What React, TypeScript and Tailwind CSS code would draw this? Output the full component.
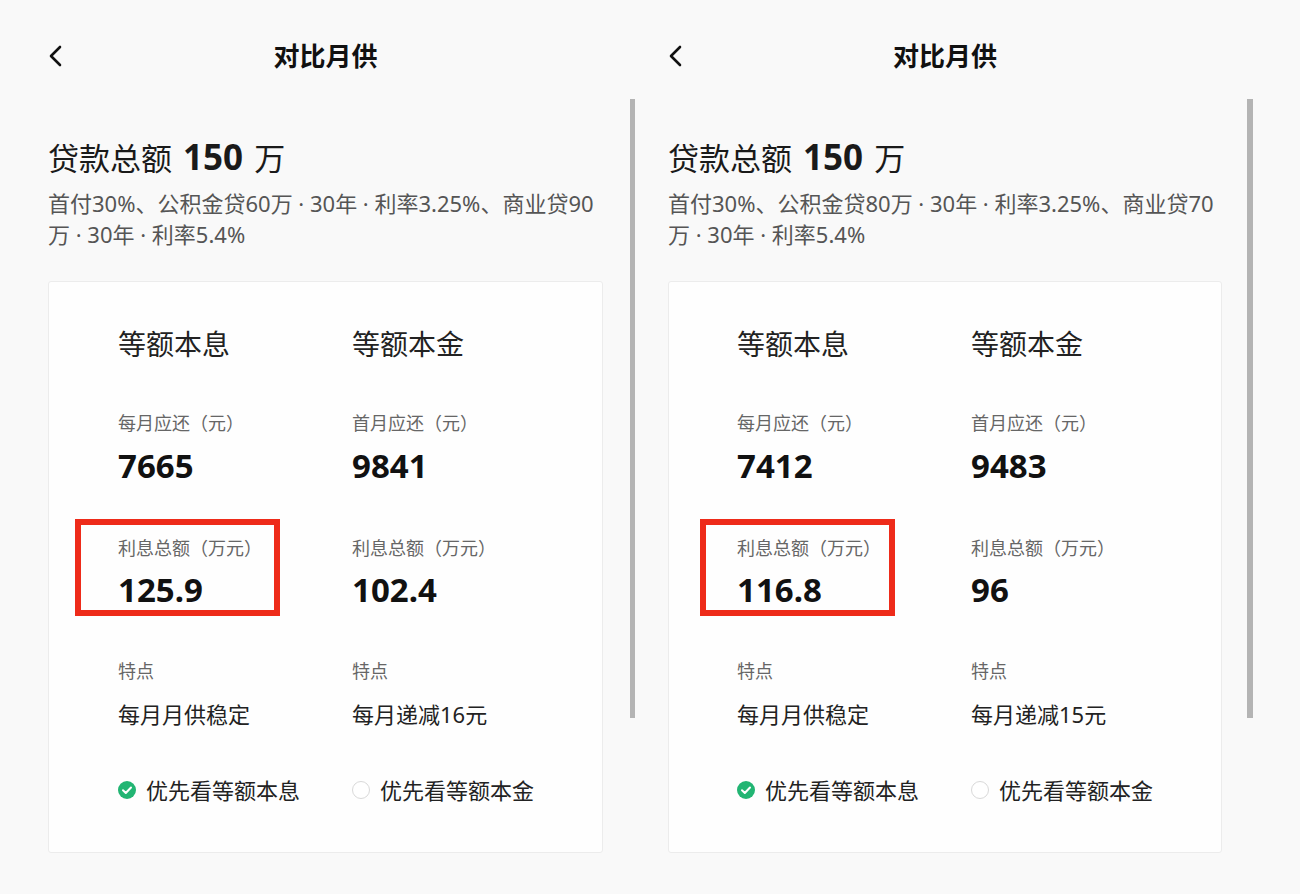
import React from 'react'

type Plan = {
  gjj: string
  sy: string
  monthly: string
  firstMonth: string
  interestA: string
  interestB: string
  decrease: string
  padL: string
  boxLeft: string
  boxWidth: string
}

const FONT = { fontFamily: '"Noto Sans", "Noto Sans CJK SC", sans-serif' }

function BackIcon() {
  return (
    <svg width="16" height="24" viewBox="0 0 16 24" fill="none">
      <polyline points="13,3 4,12 13,21" stroke="#111" strokeWidth="2.6" strokeLinecap="round" strokeLinejoin="round" />
    </svg>
  )
}

function CheckDot({ checked }: { checked: boolean }) {
  if (!checked) {
    return <span className="h-[18px] w-[18px] shrink-0 rounded-full border border-[#d9d9d9] bg-white" />
  }
  return (
    <svg width="18" height="18" viewBox="0 0 18 18" className="shrink-0">
      <circle cx="9" cy="9" r="9" fill="#22b573" />
      <polyline points="5,9.3 7.8,12 13,6.5" fill="none" stroke="#fff" strokeWidth="2" strokeLinecap="round" strokeLinejoin="round" />
    </svg>
  )
}

function Panel({ p, first }: { p: Plan; first: boolean }) {
  return (
    <div className={first ? 'flex flex-col pl-[48px]' : 'flex flex-col pl-[33px]'}>
      <div className="h-[99px] pt-[36px]">
        <div className={first ? 'grid h-[40px] w-[555px] grid-cols-[1fr_auto_1fr] items-center' : 'grid h-[40px] w-[554px] grid-cols-[1fr_auto_1fr] items-center'}>
          <div className="-ml-[1px]"><BackIcon /></div>
          <div className="text-[26px] font-bold leading-[40px] text-[#111]">对比月供</div>
          <div />
        </div>
      </div>

      <div className="flex items-start">
        <div className={first ? 'w-[555px]' : 'w-[554px]'}>
          <div className="mt-[38px] whitespace-nowrap text-[31px] leading-[40px] text-[#1a1a1a]">
            贷款总额 <span className="mx-[3px] text-[35px] font-bold">150</span> 万
          </div>
          <div className="mt-[10px] text-[22px] leading-[31px] text-[#555]">
            <div className="whitespace-nowrap">首付30%、公积金贷{p.gjj}万 · 30年 · 利率3.25%、商业贷{p.sy}</div>
            <div className="whitespace-nowrap">万 · 30年 · 利率5.4%</div>
          </div>

          <div className={`mt-[31px] rounded-[3px] border border-[#ececec] bg-[#fefefe] pb-[48px] pt-[44px] ${p.padL}`}>
            <div className="grid grid-cols-[234px_1fr] text-[28px] leading-[36px] text-[#222]">
              <div>等额本息</div>
              <div>等额本金</div>
            </div>

            <div className="mt-[49px] grid grid-cols-[234px_1fr]">
              <div>
                <div className="text-[18px] leading-[24px] text-[#666]">每月应还（元）</div>
                <div className="mt-[11px] text-[33px] font-bold leading-[40px] text-[#111]">{p.monthly}</div>
              </div>
              <div>
                <div className="text-[18px] leading-[24px] text-[#666]">首月应还（元）</div>
                <div className="mt-[11px] text-[33px] font-bold leading-[40px] text-[#111]">{p.firstMonth}</div>
              </div>
            </div>

            <div className="mt-[50px] grid grid-cols-[234px_1fr]">
              <div className="relative">
                <div className="text-[18px] leading-[24px] text-[#666]">利息总额（万元）</div>
                <div className="mt-[10px] text-[33px] font-bold leading-[40px] text-[#111]">{p.interestA}</div>
                <div className={`absolute top-[-17px] h-[97px] border-[6px] border-[#ee2b1a] ${p.boxLeft} ${p.boxWidth}`} />
              </div>
              <div>
                <div className="text-[18px] leading-[24px] text-[#666]">利息总额（万元）</div>
                <div className="mt-[10px] text-[33px] font-bold leading-[40px] text-[#111]">{p.interestB}</div>
              </div>
            </div>

            <div className="mt-[49px] grid grid-cols-[234px_1fr]">
              <div>
                <div className="text-[18px] leading-[24px] text-[#666]">特点</div>
                <div className="mt-[16px] text-[22px] leading-[30px] text-[#222]">每月月供稳定</div>
              </div>
              <div>
                <div className="text-[18px] leading-[24px] text-[#666]">特点</div>
                <div className="mt-[16px] text-[22px] leading-[30px] text-[#222]">{p.decrease}</div>
              </div>
            </div>

            <div className="mt-[47px] grid grid-cols-[234px_1fr] text-[22px] leading-[28px] text-[#222]">
              <div className="flex items-center gap-[10px]">
                <CheckDot checked />
                <span>优先看等额本息</span>
              </div>
              <div className="flex items-center gap-[10px]">
                <CheckDot checked={false} />
                <span>优先看等额本金</span>
              </div>
            </div>
          </div>
        </div>
        <div className={first ? 'ml-[27px] h-[619px] w-[5px] bg-[#b4b4b4]' : 'ml-[25px] h-[619px] w-[6px] bg-[#b4b4b4]'} />
      </div>
    </div>
  )
}

const plans: Plan[] = [
  {
    gjj: '60',
    sy: '90',
    monthly: '7665',
    firstMonth: '9841',
    interestA: '125.9',
    interestB: '102.4',
    decrease: '每月递减16元',
    padL: 'pl-[69px]',
    boxLeft: 'left-[-43px]',
    boxWidth: 'w-[205px]',
  },
  {
    gjj: '80',
    sy: '70',
    monthly: '7412',
    firstMonth: '9483',
    interestA: '116.8',
    interestB: '96',
    decrease: '每月递减15元',
    padL: 'pl-[68px]',
    boxLeft: 'left-[-37px]',
    boxWidth: 'w-[195px]',
  },
]

export default function App() {
  return (
    <div className="flex h-[894px] w-[1300px] overflow-hidden bg-[#f9f9f9]" style={FONT}>
      <Panel p={plans[0]} first />
      <Panel p={plans[1]} first={false} />
    </div>
  )
}
